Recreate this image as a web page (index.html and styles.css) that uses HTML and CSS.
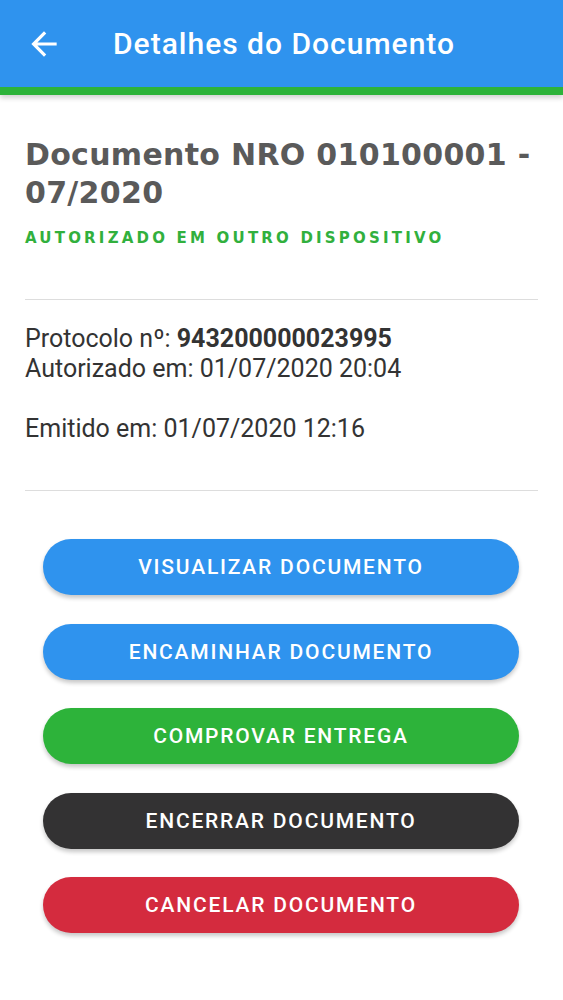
FILE: index.html
```html
<!DOCTYPE html>
<html lang="pt-BR">
<head>
<meta charset="utf-8">
<title>Detalhes do Documento</title>
<link rel="stylesheet" href="styles.css">
</head>
<body>
<header class="appbar">
  <button class="back" aria-label="Voltar">
    <svg viewBox="0 0 24 24" width="38" height="38"><path d="M20 11H7.83l5.59-5.59L12 4l-8 8 8 8 1.41-1.41L7.83 13H20v-2z" fill="#fff"/></svg>
  </button>
  <h1 class="appbar-title">Detalhes do Documento</h1>
</header>
<main class="content">
  <section class="doc-head">
    <h2 class="doc-title">Documento NRO 010100001 - 07/2020</h2>
    <p class="doc-status">AUTORIZADO EM OUTRO DISPOSITIVO</p>
  </section>
  <hr class="divider">
  <section class="doc-info">
    <p>Protocolo nº: <strong>943200000023995</strong><br>Autorizado em: 01/07/2020 20:04</p>
    <p>Emitido em: 01/07/2020 12:16</p>
  </section>
  <hr class="divider divider-bottom">
  <section class="actions">
    <button class="btn btn-blue">VISUALIZAR DOCUMENTO</button>
    <button class="btn btn-blue">ENCAMINHAR DOCUMENTO</button>
    <button class="btn btn-green">COMPROVAR ENTREGA</button>
    <button class="btn btn-dark">ENCERRAR DOCUMENTO</button>
    <button class="btn btn-red">CANCELAR DOCUMENTO</button>
  </section>
</main>
</body>
</html>
```
FILE: styles.css
```css
* { box-sizing: border-box; }
html, body { margin: 0; padding: 0; background: #fff; }
body { font-family: Roboto, "Liberation Sans", sans-serif; color: #333; }

.appbar {
  height: 95px;
  background: #2F93EE;
  border-bottom: 8px solid #2DB33A;
  display: flex;
  align-items: center;
  padding: 0 0 0 25px;
  box-shadow: 0 3px 5px rgba(0,0,0,0.18);
}
.back {
  background: none;
  border: 0;
  padding: 0;
  width: 38px;
  height: 38px;
  display: flex;
}
.appbar-title {
  margin: 0 0 0 50px;
  color: #fff;
  font-family: Roboto, sans-serif;
  font-weight: 500;
  font-size: 30px;
  letter-spacing: 1px;
}

.content { padding: 41px 25px 40px; }

.doc-title {
  margin: 0;
  font-family: "DejaVu Sans", sans-serif;
  font-weight: 700;
  font-size: 30px;
  line-height: 38px;
  letter-spacing: 0.3px;
  color: #5A5A5A;
}
.doc-status {
  margin: 17px 0 0;
  font-family: "DejaVu Sans", sans-serif;
  font-weight: 700;
  font-size: 15px;
  letter-spacing: 3.2px;
  color: #31B03D;
}

.divider {
  border: 0;
  border-top: 1.5px solid #DDDDDD;
  margin: 52px 0 0;
}

.doc-info { padding: 24px 0 0; }
.doc-info p {
  margin: 0 0 30px;
  font-size: 25px;
  line-height: 30px;
  color: #333;
}
.doc-info p:last-child { margin-bottom: 0; }
.doc-info strong { font-weight: 700; }
.divider-bottom { margin-top: 46px; }

.actions {
  display: flex;
  flex-direction: column;
  gap: 28.5px;
  padding: 48px 19px 0 18px;
}
.btn {
  height: 56px;
  border: 0;
  border-radius: 28px;
  color: #fff;
  font-family: Roboto, sans-serif;
  font-weight: 500;
  font-size: 21px;
  letter-spacing: 1.8px;
  box-shadow: 0 3px 4px rgba(0,0,0,0.22);
}
.btn-blue { background: #2F93EE; }
.btn-green { background: #2DB33A; }
.btn-dark { background: #333233; }
.btn-red { background: #D42B3E; }
```
